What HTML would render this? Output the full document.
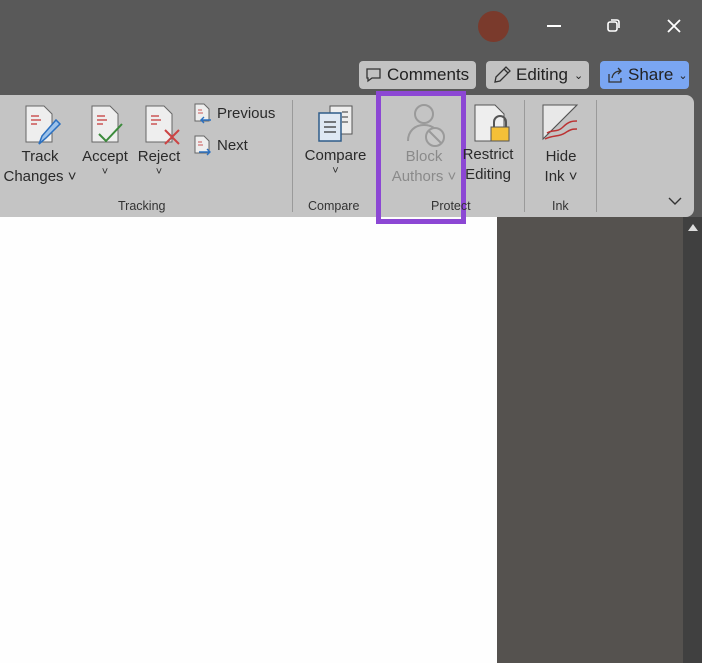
<!DOCTYPE html>
<html><head><style>
*{margin:0;padding:0;box-sizing:border-box}
body{width:702px;height:663px;overflow:hidden;background:#595959;position:relative;font-family:"Liberation Sans",sans-serif}
.a{position:absolute}
.t{position:absolute;font-size:15px;color:#2a2a2a;white-space:nowrap;text-align:center}
.s{position:absolute;font-size:12.5px;color:#333;white-space:nowrap}
.btn{position:absolute;top:61px;height:28px;border-radius:4px;background:#c2c2c2;font-size:17px;color:#222;display:flex;align-items:center;padding-left:6px}
.sep{position:absolute;top:100px;width:1px;height:112px;background:#9a9a9a}
</style></head><body>
<!-- top bar -->
<div class="a" style="left:478px;top:11px;width:31px;height:31px;border-radius:50%;background:#7a3a2c"></div>
<div class="a" style="left:547px;top:25px;width:14px;height:2px;background:#fff"></div>
<svg class="a" style="left:606px;top:18px" width="16" height="16"><rect x="2" y="4" width="9" height="9" rx="2" fill="none" stroke="#fff" stroke-width="1.6"/><path d="M5 2h6a2 2 0 0 1 2 2v6" fill="none" stroke="#fff" stroke-width="1.6"/></svg>
<svg class="a" style="left:666px;top:18px" width="16" height="16"><path d="M2 2L14 14M14 2L2 14" stroke="#fff" stroke-width="1.8"/></svg>
<div class="btn" style="left:359px;width:117px"><svg width="18" height="18" style="margin-right:4px"><path d="M2 3h13v9H7l-4 3v-3H2z" fill="none" stroke="#333" stroke-width="1.3"/></svg>Comments</div>
<div class="btn" style="left:486px;width:103px"><svg width="20" height="20" style="margin-right:4px"><path d="M3 17l1-5L14 2l4 4L8 16z M12 4l4 4" fill="none" stroke="#333" stroke-width="1.3"/></svg>Editing <span style="font-size:11px;margin-left:6px">⌄</span></div>
<div class="btn" style="left:600px;width:89px;background:#7aa6f2"><svg width="18" height="18" style="margin-right:4px"><path d="M3 8v8h12v-4 M6 12c1-5 4-7 9-7 M12 2l3 3-3 3" fill="none" stroke="#333" stroke-width="1.3"/></svg>Share <span style="font-size:11px;margin-left:5px">⌄</span></div>
<!-- ribbon -->
<div class="a" style="left:0;top:95px;width:694px;height:122px;background:#c4c4c4;border-radius:0 8px 8px 0"></div>
<!-- doc area -->
<div class="a" style="left:0;top:217px;width:497px;height:446px;background:#fefefe"></div>
<div class="a" style="left:497px;top:217px;width:186px;height:446px;background:#55524f"></div>
<div class="a" style="left:683px;top:217px;width:19px;height:446px;background:#404040"></div>
<svg class="a" style="left:687px;top:222px" width="12" height="10"><path d="M1 9L6 2l5 7z" fill="#ddd"/></svg>
<!-- tracking icons -->
<svg class="a" style="left:23px;top:104px" width="40" height="48"><path d="M3 2h18l8 8v28H3z" fill="#eee" stroke="#666"/><path d="M8 12h8M8 16h10M8 20h6" stroke="#c55" stroke-width="1.5"/><path d="M16 40l3-8L33 16l4 4L23 34z" fill="#9cc2ea" stroke="#2b70c0" stroke-width="1.5"/></svg>
<svg class="a" style="left:89px;top:104px" width="40" height="48"><path d="M3 2h18l8 8v28H3z" fill="#eee" stroke="#666"/><path d="M8 12h8M8 16h10M8 20h6" stroke="#c55" stroke-width="1.5"/><path d="M10 30l7 7L33 20" fill="none" stroke="#3c8b3c" stroke-width="2"/></svg>
<svg class="a" style="left:143px;top:104px" width="40" height="48"><path d="M3 2h18l8 8v28H3z" fill="#eee" stroke="#666"/><path d="M8 12h8M8 16h10M8 20h6" stroke="#c55" stroke-width="1.5"/><path d="M22 26l14 14M36 26L22 40" stroke="#c44" stroke-width="2"/></svg>
<svg class="a" style="left:193px;top:103px" width="20" height="22"><path d="M2 1h9l5 5v12H2z" fill="#eee" stroke="#666"/><path d="M5 7h4M5 10h5" stroke="#c55"/><path d="M18 17H8M11 14l-3 3 3 3" fill="none" stroke="#2b70c0" stroke-width="1.4"/></svg>
<svg class="a" style="left:193px;top:135px" width="20" height="22"><path d="M2 1h9l5 5v12H2z" fill="#eee" stroke="#666"/><path d="M5 7h4M5 10h5" stroke="#c55"/><path d="M6 17h11M14 14l3 3-3 3" fill="none" stroke="#2b70c0" stroke-width="1.4"/></svg>
<div class="t" style="left:0;top:148px;width:80px">Track</div>
<div class="t" style="left:0;top:168px;width:80px">Changes ˅</div>
<div class="t" style="left:78px;top:148px;width:54px">Accept</div>
<div class="t" style="left:78px;top:166px;width:54px;font-size:11px">˅</div>
<div class="t" style="left:134px;top:148px;width:50px">Reject</div>
<div class="t" style="left:134px;top:166px;width:50px;font-size:11px">˅</div>
<div class="t" style="left:217px;top:105px">Previous</div>
<div class="t" style="left:217px;top:137px">Next</div>
<div class="s" style="left:118px;top:199px">Tracking</div>
<div class="sep" style="left:292px"></div>
<!-- compare -->
<svg class="a" style="left:316px;top:104px" width="40" height="40"><rect x="14" y="2" width="22" height="28" fill="#eee" stroke="#555"/><path d="M26 8h6M26 13h6M26 18h6" stroke="#333"/><rect x="3" y="9" width="22" height="28" fill="#dfe8f3" stroke="#2e5c8a" stroke-width="1.5"/><path d="M8 18h12M8 23h12M8 28h12" stroke="#333" stroke-width="1.3"/></svg>
<div class="t" style="left:298px;top:147px;width:75px">Compare</div>
<div class="t" style="left:298px;top:165px;width:75px;font-size:11px">˅</div>
<div class="s" style="left:308px;top:199px">Compare</div>
<!-- block authors -->
<svg class="a" style="left:405px;top:103px" width="42" height="46"><circle cx="19" cy="11" r="9" fill="none" stroke="#9a9a9a" stroke-width="2"/><path d="M3 38c0-10 7-16 16-16 5 0 9 2 11 4" fill="none" stroke="#9a9a9a" stroke-width="2"/><circle cx="30" cy="34" r="9" fill="#c8c8c8" stroke="#9a9a9a" stroke-width="2"/><path d="M24 28l12 12" stroke="#9a9a9a" stroke-width="2"/></svg>
<div class="t" style="left:382px;top:148px;width:84px;color:#8a8a8a">Block</div>
<div class="t" style="left:382px;top:168px;width:84px;color:#8a8a8a">Authors ˅</div>
<div class="a" style="left:376px;top:91px;width:90px;height:133px;border:5px solid #8c47d4"></div>
<!-- restrict -->
<svg class="a" style="left:473px;top:103px" width="40" height="40"><path d="M2 2h20l9 9v27H2z" fill="#eee" stroke="#555"/><rect x="18" y="24" width="18" height="14" fill="#f4c038" stroke="#555"/><path d="M21 24v-5a6 6 0 0 1 12 0v5" fill="none" stroke="#555" stroke-width="2"/></svg>
<div class="t" style="left:460px;top:146px;width:56px">Restrict</div>
<div class="t" style="left:460px;top:166px;width:56px">Editing</div>
<div class="s" style="left:431px;top:199px">Protect</div>
<div class="sep" style="left:524px"></div>
<!-- ink -->
<svg class="a" style="left:541px;top:103px" width="40" height="38"><path d="M2 2h34L2 36z" fill="#e8e8e8" stroke="#555"/><path d="M2 36L36 2" stroke="#555"/><path d="M6 30c6-4 10 0 16-6s10-6 14-6" fill="none" stroke="#b33" stroke-width="1.5"/><path d="M4 36c8-4 14-2 20-6s8-4 12-4" fill="none" stroke="#b33" stroke-width="1.5"/></svg>
<div class="t" style="left:538px;top:148px;width:46px">Hide</div>
<div class="t" style="left:538px;top:168px;width:46px">Ink ˅</div>
<div class="s" style="left:552px;top:199px">Ink</div>
<div class="sep" style="left:596px"></div>
<svg class="a" style="left:668px;top:196px" width="14" height="10"><path d="M1 2l6 6 6-6" fill="none" stroke="#333" stroke-width="1.4"/></svg>
</body></html>
